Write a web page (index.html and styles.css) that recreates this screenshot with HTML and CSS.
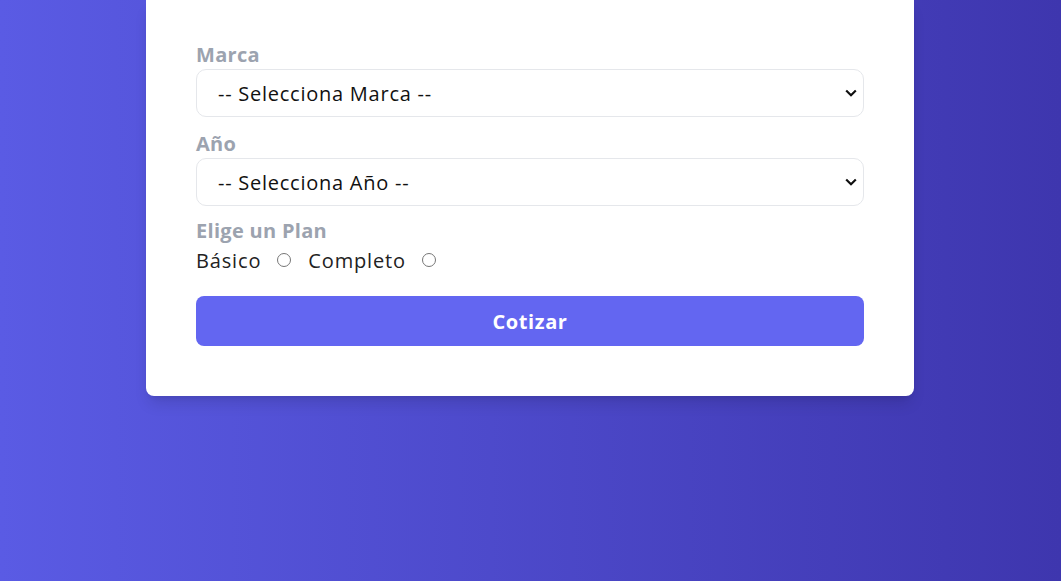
FILE: index.html
```html
<!DOCTYPE html>
<html lang="es">
<head>
<meta charset="utf-8">
<title>Cotizador</title>
<link rel="stylesheet" href="styles.css">
</head>
<body>
<main class="page">
  <div class="card">
    <form class="form">
      <div class="field">
        <label class="label" for="marca">Marca</label>
        <select id="marca" class="select">
          <option>-- Selecciona Marca --</option>
        </select>
      </div>
      <div class="field">
        <label class="label" for="year">Año</label>
        <select id="year" class="select">
          <option>-- Selecciona Año --</option>
        </select>
      </div>
      <div class="field field-plan">
        <span class="label">Elige un Plan</span>
        <div class="plans">
          <label class="plan">Básico <input type="radio" name="plan" class="radio"></label>
          <label class="plan">Completo <input type="radio" name="plan" class="radio"></label>
        </div>
      </div>
      <button type="button" class="button">Cotizar</button>
    </form>
  </div>
</main>
</body>
</html>
```
FILE: styles.css
```css
html, body {
  margin: 0;
  padding: 0;
}
body {
  font-family: "Open Sans", "Liberation Sans", sans-serif;
  background: linear-gradient(to right, #5a5be4, #3e36ae);
  min-height: 100vh;
}
.page {
  display: flex;
  justify-content: center;
  padding-right: 1px;
}
.card {
  width: 768px;
  background: #fff;
  border-radius: 0 0 8px 8px;
  box-shadow: 0 10px 15px -3px rgba(0,0,0,0.12), 0 4px 6px -4px rgba(0,0,0,0.1);
  padding: 40px 50px 50px;
  box-sizing: border-box;
}
.form {
  display: flex;
  flex-direction: column;
}
.field {
  display: flex;
  flex-direction: column;
  margin-bottom: 13px;
}
.field:first-child .label {
  padding-top: 1px;
}
.field-plan {
  margin-top: -2px;
}
.label {
  font-size: 20px;
  line-height: 28px;
  font-weight: 700;
  color: #9ca3af;
  letter-spacing: 0.3px;
}
.select {
  -webkit-appearance: none;
  appearance: none;
  height: 48px;
  width: 100%;
  font-family: inherit;
  font-size: 20px;
  letter-spacing: 0.75px;
  color: #111;
  background-color: #fff;
  background-image: url("data:image/svg+xml,%3Csvg xmlns='http://www.w3.org/2000/svg' width='12' height='8' viewBox='0 0 12 8'%3E%3Cpath d='M1.2 1.5 L6 6.2 L10.8 1.5' fill='none' stroke='%23111' stroke-width='2.2'/%3E%3C/svg%3E");
  background-repeat: no-repeat;
  background-position: right 6px center;
  background-size: 12px 8px;
  border: 1px solid #e5e7eb;
  border-radius: 10px;
  padding: 0 24px 0 21px;
}
.plans {
  display: flex;
  align-items: center;
  gap: 17px;
  height: 28px;
  padding-top: 1px;
}
.plan {
  font-size: 20px;
  letter-spacing: 0.85px;
  color: #222;
  display: flex;
  align-items: center;
}
.radio {
  margin: 0 0 0 16px;
  width: 14px;
  height: 14px;
}
.button {
  margin-top: 9px;
  height: 50px;
  border: none;
  border-radius: 8px;
  background: #6366f1;
  color: #fff;
  font-family: inherit;
  font-size: 20px;
  font-weight: 700;
  letter-spacing: 0.6px;
}
```
